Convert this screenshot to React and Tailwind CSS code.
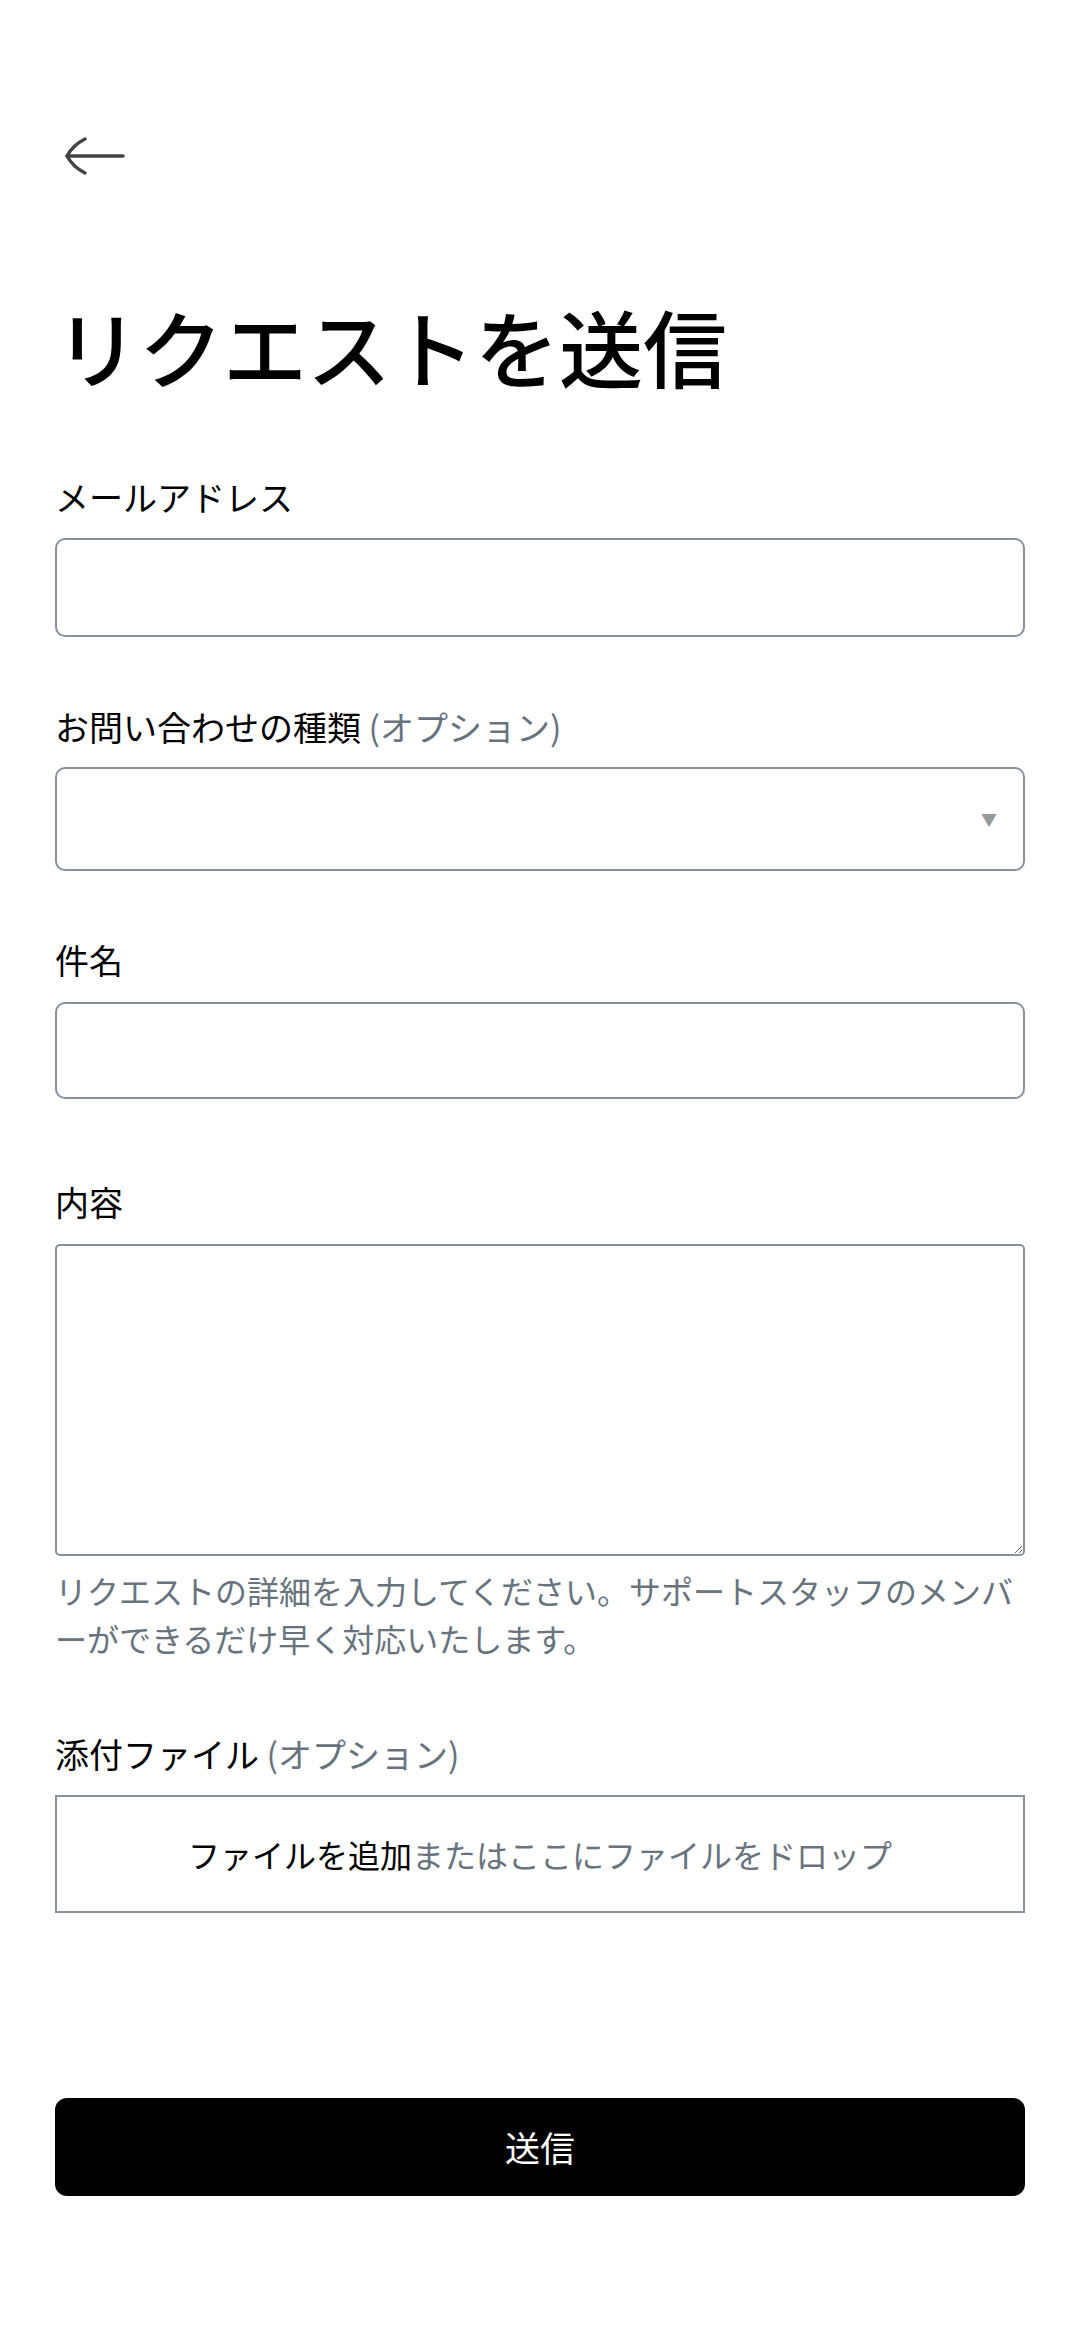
import React from 'react';

function BackArrow() {
  return (
    <svg width="62" height="40" viewBox="0 0 62 40" fill="none" stroke="#444444" strokeWidth="3.5" strokeLinecap="round" strokeLinejoin="round">
      <path d="M3 20 H59" />
      <path d="M21 3 Q9 9 3 20 Q9 31 21 37" />
    </svg>
  );
}

function Label({ children, optional }) {
  return (
    <label className="block text-[34px] leading-[48px] text-black">
      {children}
      {optional && <span className="text-[#68737d]"> (オプション)</span>}
    </label>
  );
}

export default function App() {
  return (
    <div
      className="min-h-[2340px] w-[1080px] bg-white px-[55px]"
      style={{ fontFamily: '"Noto Sans CJK JP", "Noto Sans", sans-serif' }}
    >
      <div className="pt-[136px]">
        <button className="block ml-[9px]">
          <BackArrow />
        </button>
      </div>

      <h1 className="mt-[120px] text-[84px] leading-[100px] font-medium text-black">
        リクエストを送信
      </h1>

      <form className="mt-[77px]" onSubmit={(e) => e.preventDefault()}>
        <div>
          <Label>メールアドレス</Label>
          <input
            type="email"
            className="mt-[17px] block h-[99px] w-full rounded-[10px] border-2 border-[#87929d] px-5 text-[34px] outline-none"
          />
        </div>

        <div className="mt-[66px]">
          <Label optional>お問い合わせの種類</Label>
          <div className="relative mt-[16px]">
            <select className="block h-[104px] w-full appearance-none rounded-[10px] border-2 border-[#87929d] bg-white px-5 text-[34px] outline-none">
              <option value=""></option>
            </select>
            <span className="pointer-events-none absolute right-[28px] top-1/2 -translate-y-1/2 text-[16px] text-[#999999]">▼</span>
          </div>
        </div>

        <div className="mt-[65px]">
          <Label>件名</Label>
          <input
            type="text"
            className="mt-[18px] block h-[97px] w-full rounded-[10px] border-2 border-[#87929d] px-5 text-[34px] outline-none"
          />
        </div>

        <div className="mt-[79px]">
          <Label>内容</Label>
          <textarea className="mt-[18px] block h-[312px] w-full rounded-[5px] border-2 border-[#87929d] p-5 text-[34px] outline-none" />
          <p className="mt-[10px] text-[32px] leading-[48px] text-[#68737d]">
            リクエストの詳細を入力してください。サポートスタッフのメンバーができるだけ早く対応いたします。
          </p>
        </div>

        <div className="mt-[68px]">
          <Label optional>添付ファイル</Label>
          <div className="mt-[17px] flex h-[118px] items-center justify-center border-2 border-[#87929d] text-[32px]">
            <span className="text-black">ファイルを追加</span>
            <span className="text-[#68737d]">またはここにファイルをドロップ</span>
          </div>
        </div>

        <button
          type="submit"
          className="mt-[185px] flex h-[98px] w-full items-center justify-center rounded-[12px] bg-black text-[35px] text-white"
        >
          送信
        </button>
      </form>
    </div>
  );
}
